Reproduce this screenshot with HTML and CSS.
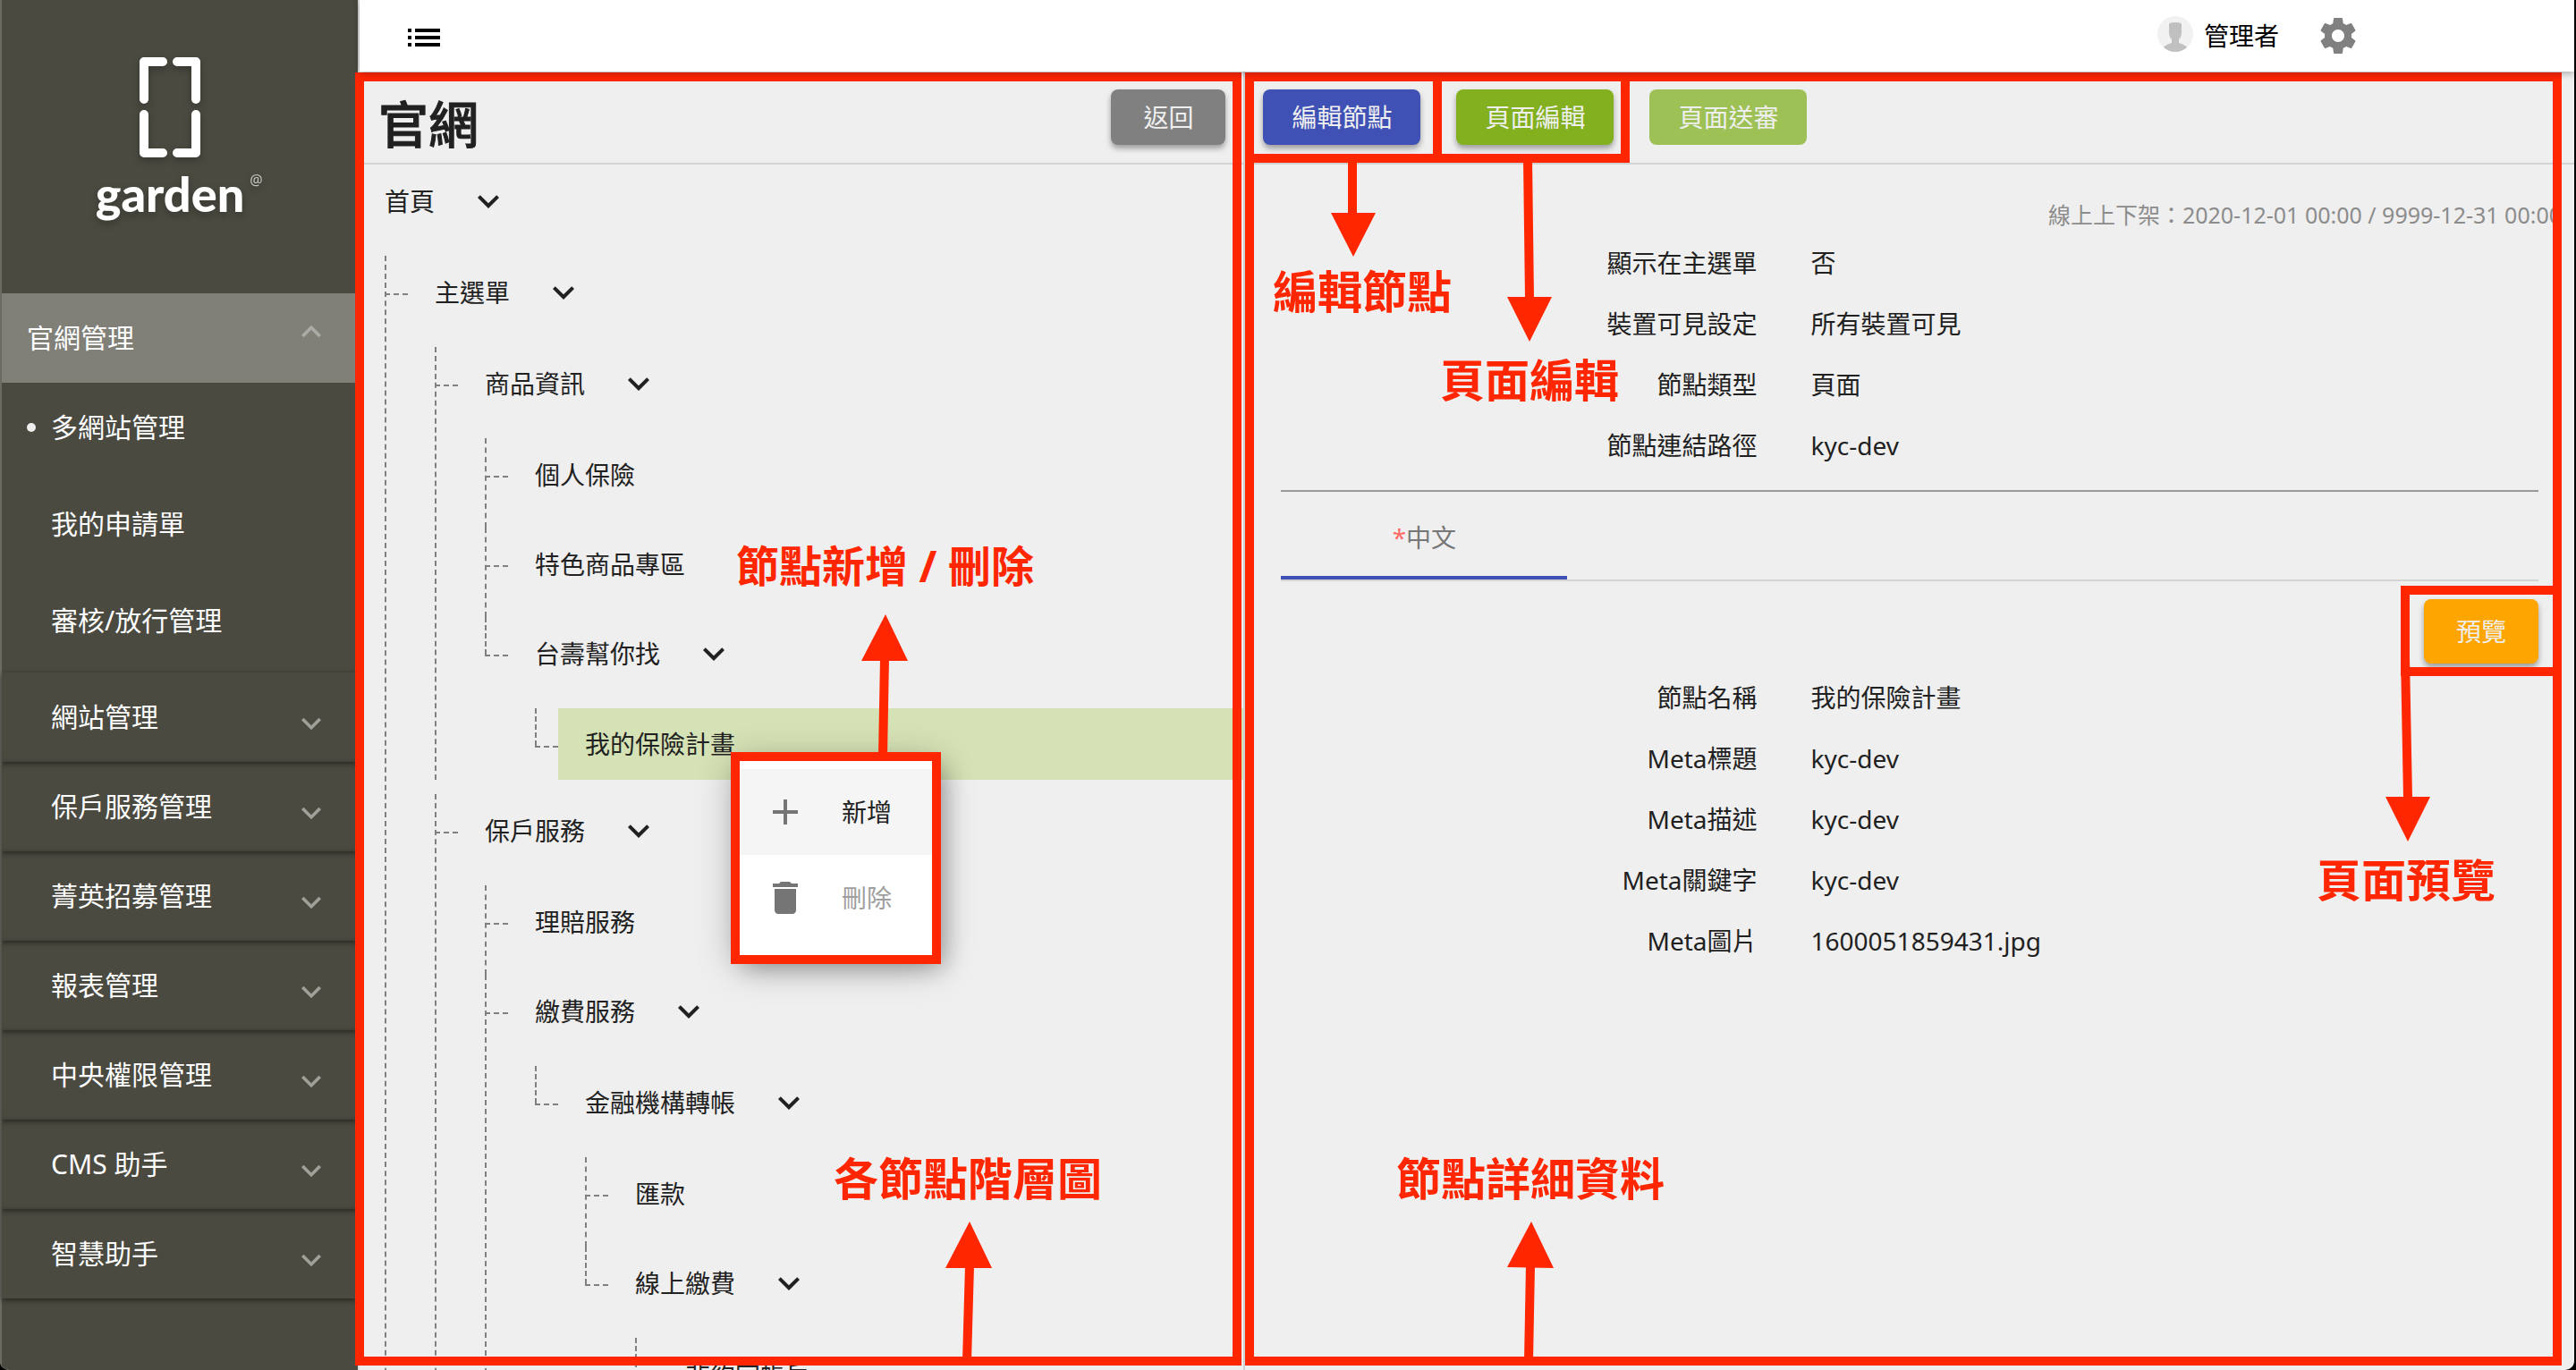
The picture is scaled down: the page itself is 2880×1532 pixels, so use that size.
FILE: index.html
```html
<!DOCTYPE html>
<html lang="zh-TW">
<head>
<meta charset="utf-8">
<title>官網管理</title>
<link rel="stylesheet" href="styles.css">
</head>
<body>
<svg class="defs" aria-hidden="true">
  <symbol id="chevron-down" viewBox="0 0 24 24"><path d="M7.41 8.59 12 13.17l4.59-4.58L18 10l-6 6-6-6z"/></symbol>
  <symbol id="chevron-up" viewBox="0 0 24 24"><path d="M7.41 15.41 12 10.83l4.59 4.58L18 14l-6-6-6 6z"/></symbol>
</svg>
<div class="window">
  <aside class="sidebar">
    <div class="logo">
      <svg class="logo-mark" viewBox="0 0 70 114" aria-hidden="true">
        <g fill="none" stroke="#fff" stroke-width="10" stroke-linecap="round" stroke-linejoin="round">
          <path d="M27 6H6V48M43 6H64V48M27 108H6V65M43 108H64V65"/>
        </g>
      </svg>
      <div class="logo-name">garden<span class="logo-at">@</span></div>
    </div>
    <nav class="menu">
      <button class="menu-row open">官網管理<svg class="menu-arrow"><use href="#chevron-up"/></svg></button>
      <a class="sub-row current" href="#">多網站管理</a>
      <a class="sub-row" href="#">我的申請單</a>
      <a class="sub-row" href="#">審核/放行管理</a>
      <button class="menu-row">網站管理<svg class="menu-arrow"><use href="#chevron-down"/></svg></button>
      <button class="menu-row">保戶服務管理<svg class="menu-arrow"><use href="#chevron-down"/></svg></button>
      <button class="menu-row">菁英招募管理<svg class="menu-arrow"><use href="#chevron-down"/></svg></button>
      <button class="menu-row">報表管理<svg class="menu-arrow"><use href="#chevron-down"/></svg></button>
      <button class="menu-row">中央權限管理<svg class="menu-arrow"><use href="#chevron-down"/></svg></button>
      <button class="menu-row">CMS 助手<svg class="menu-arrow"><use href="#chevron-down"/></svg></button>
      <button class="menu-row">智慧助手<svg class="menu-arrow"><use href="#chevron-down"/></svg></button>
    </nav>
  </aside>

  <div class="page">
    <header class="topbar">
      <button class="icon-button list" aria-label="選單">
        <svg viewBox="0 0 24 24"><path d="M3 13h2v-2H3v2zm0 4h2v-2H3v2zm0-8h2V7H3v2zm4 4h14v-2H7v2zm0 4h14v-2H7v2zM7 7v2h14V7H7z"/></svg>
      </button>
      <div class="user">
        <svg class="avatar" viewBox="0 0 40 40" aria-hidden="true">
          <circle cx="20" cy="20" r="20" fill="#f1f1f1"/>
          <path d="M13 9Q13 7 20 7T27 9V18Q27 23 24 26V30Q31 32 33 35Q27 40 20 40T7 35Q9 32 16 30V26Q13 23 13 18Z" fill="#c0c0c0"/>
        </svg>
        <span>管理者</span>
      </div>
      <button class="icon-button gear" aria-label="設定">
        <svg viewBox="0 0 24 24"><path d="M19.43 12.98c.04-.32.07-.64.07-.98s-.03-.66-.07-.98l2.11-1.65c.19-.15.24-.42.12-.64l-2-3.46c-.12-.22-.39-.3-.61-.22l-2.49 1c-.52-.4-1.08-.73-1.69-.98l-.38-2.65C14.46 2.18 14.25 2 14 2h-4c-.25 0-.46.18-.49.42l-.38 2.65c-.61.25-1.17.59-1.69.98l-2.49-1c-.23-.09-.49 0-.61.22l-2 3.46c-.13.22-.07.49.12.64l2.11 1.65c-.04.32-.07.65-.07.98s.03.66.07.98l-2.11 1.65c-.19.15-.24.42-.12.64l2 3.46c.12.22.39.3.61.22l2.49-1c.52.4 1.08.73 1.69.98l.38 2.65c.03.24.24.42.49.42h4c.25 0 .46-.18.49-.42l.38-2.65c.61-.25 1.17-.59 1.69-.98l2.49 1c.23.09.49 0 .61-.22l2-3.46c.12-.22.07-.49-.12-.64l-2.11-1.65zM12 15.5c-1.93 0-3.5-1.57-3.5-3.5s1.57-3.5 3.5-3.5 3.5 1.57 3.5 3.5-1.57 3.5-3.5 3.5z"/></svg>
      </button>
    </header>

    <main class="panels">
      <section class="tree-panel">
        <div class="panel-head tree-head">
          <h1>官網</h1>
          <button class="btn btn-gray">返回</button>
        </div>
        <div class="tree">
          <div class="node">首頁<svg><use href="#chevron-down"/></svg></div>
          <ul>
            <li class="continues"><div class="node">主選單<svg><use href="#chevron-down"/></svg></div>
              <ul>
                <li><div class="node">商品資訊<svg><use href="#chevron-down"/></svg></div>
                  <ul>
                    <li><div class="node">個人保險</div></li>
                    <li><div class="node">特色商品專區</div></li>
                    <li><div class="node">台壽幫你找<svg><use href="#chevron-down"/></svg></div>
                      <ul>
                        <li><div class="node selected">我的保險計畫</div></li>
                      </ul>
                    </li>
                  </ul>
                </li>
                <li class="continues"><div class="node">保戶服務<svg><use href="#chevron-down"/></svg></div>
                  <ul>
                    <li><div class="node">理賠服務</div></li>
                    <li class="continues"><div class="node">繳費服務<svg><use href="#chevron-down"/></svg></div>
                      <ul>
                        <li><div class="node">金融機構轉帳<svg><use href="#chevron-down"/></svg></div>
                          <ul>
                            <li><div class="node">匯款</div></li>
                            <li><div class="node">線上繳費<svg><use href="#chevron-down"/></svg></div>
                              <ul>
                                <li><div class="node">非約定帳戶</div></li>
                              </ul>
                            </li>
                          </ul>
                        </li>
                      </ul>
                    </li>
                  </ul>
                </li>
              </ul>
            </li>
          </ul>
        </div>
      </section>

      <section class="detail-panel">
        <div class="panel-head detail-head">
          <button class="btn btn-blue">編輯節點</button>
          <button class="btn btn-green">頁面編輯</button>
          <button class="btn btn-green" disabled>頁面送審</button>
        </div>
        <p class="online">線上上下架：2020-12-01 00:00 / 9999-12-31 00:00</p>
        <div class="detail-body">
          <dl class="fields">
            <dt>顯示在主選單</dt><dd>否</dd>
            <dt>裝置可見設定</dt><dd>所有裝置可見</dd>
            <dt>節點類型</dt><dd>頁面</dd>
            <dt>節點連結路徑</dt><dd>kyc-dev</dd>
          </dl>
          <hr>
          <div class="tabs" role="tablist">
            <button class="tab" role="tab" aria-selected="true"><span class="required">*</span>中文</button>
          </div>
          <div class="preview-row"><button class="btn btn-orange">預覽</button></div>
          <dl class="fields">
            <dt>節點名稱</dt><dd>我的保險計畫</dd>
            <dt>Meta標題</dt><dd>kyc-dev</dd>
            <dt>Meta描述</dt><dd>kyc-dev</dd>
            <dt>Meta關鍵字</dt><dd>kyc-dev</dd>
            <dt>Meta圖片</dt><dd>1600051859431.jpg</dd>
          </dl>
        </div>
      </section>
    </main>
  </div>
</div>

<div class="context-menu" role="menu">
  <button class="context-item hover" role="menuitem">
    <svg viewBox="0 0 24 24"><path d="M19 13h-6v6h-2v-6H5v-2h6V5h2v6h6v2z"/></svg>新增
  </button>
  <button class="context-item" role="menuitem" disabled>
    <svg viewBox="0 0 24 24"><path d="M6 19c0 1.1.9 2 2 2h8c1.100 0 2-.9 2-2V7H6v12zM19 4h-3.500l-1-1h-5l-1 1H5v2h14V4z"/></svg>刪除
  </button>
</div>

<div class="notes">
  <svg class="note-shapes" aria-hidden="true">
    <g class="frames">
      <rect x="402" y="86" width="981" height="1436"/>
      <rect x="1397" y="86" width="1462" height="1436"/>
      <rect x="1397" y="86" width="210" height="91"/>
      <rect x="1607" y="86" width="210" height="91"/>
      <rect x="2689" y="660" width="170" height="91"/>
      <rect x="822" y="846" width="225" height="227"/>
    </g>
    <g class="shafts">
      <path d="M987 846L989 736M1081 1522L1084 1415M1512 177V240M1708 177L1710 334M2689 735L2692 893M1709 1522L1711 1415"/>
    </g>
    <g class="heads">
      <path d="M990 687L1015 739H963zM1084 1366L1109 1418H1057zM1513 287L1488 238H1538zM1710 382L1685 332H1735zM2692 941L2667 891H2717zM1712 1366L1737 1418L1685 1417z"/>
    </g>
  </svg>
  <span class="note note-menu">節點新增 / 刪除</span>
  <span class="note note-tree">各節點階層圖</span>
  <span class="note note-edit-node">編輯節點</span>
  <span class="note note-edit-page">頁面編輯</span>
  <span class="note note-preview">頁面預覽</span>
  <span class="note note-detail">節點詳細資料</span>
</div>
</body>
</html>
```
FILE: styles.css
```css
* { box-sizing: border-box; }

html { background: #000; }

body {
  margin: 0;
  font-family: "Noto Sans", "Noto Sans CJK TC", sans-serif;
  font-size: 28px;
  line-height: 40px;
  color: #212121;
  overflow: hidden;
}

button { font: inherit; color: inherit; border: 0; background: none; padding: 0; }
.defs { display: none; }
svg { display: block; fill: currentColor; }

.window {
  display: flex;
  height: 100vh;
  margin-right: 2px;
  border-radius: 0 0 10px 10px;
  overflow: hidden;
  background: #efefef;
}

/* Sidebar */
.sidebar {
  flex: 0 0 402px;
  background: #4a4a41;
  border-left: 2px solid #6b6b63;
  border-right: 2px solid #dedede;
  color: #fff;
  font-size: 30px;
}
.logo {
  height: 328px;
  padding-top: 63px;
  display: flex;
  flex-direction: column;
  align-items: center;
  gap: 10px;
  padding-right: 22px;
  filter: drop-shadow(0 4px 4px rgba(0, 0, 0, .25));
}
.logo-mark { width: 70px; height: 114px; }
.logo-name {
  position: relative;
  font: 900 54px/60px Lato, sans-serif;
}
.logo-at {
  position: absolute;
  left: 100%;
  top: 4px;
  margin-left: 6px;
  font: 16px/20px "Noto Sans", sans-serif;
  color: #c4c4c0;
}
.menu-row {
  display: flex;
  align-items: center;
  justify-content: space-between;
  width: 100%;
  height: 100px;
  padding: 0 30px 0 55px;
  text-align: left;
  box-shadow: 0 2px 6px rgba(0, 0, 0, .5);
}
.menu-row.open { background: #808078; padding-left: 28px; box-shadow: none; }
.menu-arrow { width: 44px; height: 44px; margin-top: 14px; color: #a0a09a; }
.open .menu-arrow { margin-top: 0; margin-bottom: 14px; color: #acaca8; }
.sub-row {
  display: flex;
  align-items: center;
  height: 108px;
  padding: 0 0 8px 55px;
  color: #fff;
  text-decoration: none;
}
.sub-row.current { padding-left: 28px; gap: 17px; }
.sub-row.current::before {
  content: "";
  width: 10px;
  height: 10px;
  border-radius: 50%;
  background: #efefef;
}

/* Top bar */
.page { flex: 1; min-width: 0; display: flex; flex-direction: column; }
.topbar {
  flex: none;
  display: flex;
  align-items: center;
  height: 80px;
  padding: 0 240px 0 48px;
  background: #fff;
  color: #000;
  box-shadow: 0 2px 8px rgba(0, 0, 0, .3);
  z-index: 1;
}
.icon-button svg { width: 48px; height: 48px; }
.icon-button.list { padding-top: 4px; }
.gear { color: #808080; }
.user { display: flex; align-items: center; gap: 12px; margin: 0 42px 0 auto; }
.avatar { width: 40px; height: 40px; margin-bottom: 4px; }

/* Panels */
.panels { flex: 1; min-height: 0; display: flex; }
.tree-panel { flex: 0 0 40%; border-right: 2px solid #d0d0d0; overflow: hidden; }
.detail-panel { flex: 1; min-width: 0; }
.panel-head {
  display: flex;
  height: 104px;
  padding-top: 20px;
  border-bottom: 2px solid #d3d3d3;
}
.tree-head { justify-content: space-between; padding-left: 21px; padding-right: 20px; }
h1 {
  margin: 0;
  font-size: 56px;
  line-height: 76px;
  font-weight: 500;
  -webkit-text-stroke: 1px currentColor;
}
.detail-head { gap: 40px; padding-left: 20px; }

.btn {
  height: 62px;
  min-width: 128px;
  padding: 0 32px;
  border-radius: 8px;
  color: #efefef;
  box-shadow: 0 4px 6px rgba(0, 0, 0, .35);
}
.btn-gray { background: #808080; }
.btn-blue { background: #3f51b5; }
.btn-green { background: #82b01e; }
.btn-green:disabled { background: #9dc155; box-shadow: none; }
.btn-orange { background: #ffa500; height: 72px; }

/* Tree */
.tree { padding-left: 28px; }
.tree ul { list-style: none; margin: 2px 0 0; padding: 0; }
.tree li { position: relative; padding-left: 26px; }
.tree li li { margin-left: 30px; }
.tree li::before {
  content: "";
  position: absolute;
  left: 0;
  top: 0;
  height: 100%;
  border-left: 2px dashed #808080;
}
.tree li:last-child:not(.continues)::before { height: 42px; }
.tree li::after {
  content: "";
  position: absolute;
  left: 0;
  top: 42px;
  width: 26px;
  border-top: 2px dashed #808080;
}
.node {
  display: flex;
  align-items: center;
  gap: 36px;
  height: 100px;
  padding-bottom: 18px;
}
.tree li .node { padding-left: 30px; }
.node svg { width: 48px; height: 48px; }
.node.selected { height: 80px; padding-bottom: 0; margin-bottom: 16px; background: #d5e2b5; }

/* Node details */
.online {
  margin: 36px 14px 14px;
  font-size: 25px;
  line-height: 40px;
  color: #8c8c8c;
  text-align: right;
}
.detail-body { padding: 0 40px; }
.fields { display: grid; grid-template-columns: 38% 1fr; column-gap: 58px; margin: 0; }
.fields dt, .fields dd { margin: 0; padding: 0 0 28px; }
.fields dt { padding-right: 2px; text-align: right; }
hr { margin: 2px 0 0; border: 0; border-top: 2px solid #9a9a9a; }
.tabs { display: flex; height: 100px; border-bottom: 2px solid #d3d3d3; }
.tab { width: 320px; padding-top: 8px; color: #777; border-bottom: 4px solid #3f51b5; }
.required { color: #ff6b66; }
.preview-row { display: flex; justify-content: flex-end; padding: 20px 0 18px; }

/* Context menu */
.context-menu {
  position: absolute;
  left: 822px;
  top: 844px;
  width: 224px;
  padding: 16px 0;
  background: #fff;
  box-shadow: 0 10px 40px rgba(0, 0, 0, .3), 10px 14px 24px rgba(0, 0, 0, .25);
}
.context-item {
  display: flex;
  align-items: center;
  gap: 39px;
  width: 100%;
  height: 96px;
  padding-left: 32px;
  color: #212121;
}
.context-item svg { width: 48px; height: 48px; color: #757575; }
.context-item.hover { background: #f5f5f5; }
.context-item:disabled { color: #9e9e9e; }

/* Red annotations */
.notes { position: absolute; inset: 0; color: #ff2600; pointer-events: none; }
.note-shapes { width: 100%; height: 100%; }
.frames, .shafts { fill: none; stroke: #ff2600; stroke-width: 10; }
.note {
  position: absolute;
  font-size: 50px;
  line-height: 60px;
  font-weight: 700;
  white-space: nowrap;
}
.note-menu { left: 823px; top: 603px; font-size: 48px; }
.note-tree { left: 932px; top: 1288px; }
.note-edit-node { left: 1423px; top: 296px; }
.note-edit-page { left: 1610px; top: 395px; }
.note-preview { left: 2590px; top: 954px; }
.note-detail { left: 1561px; top: 1288px; }
```
